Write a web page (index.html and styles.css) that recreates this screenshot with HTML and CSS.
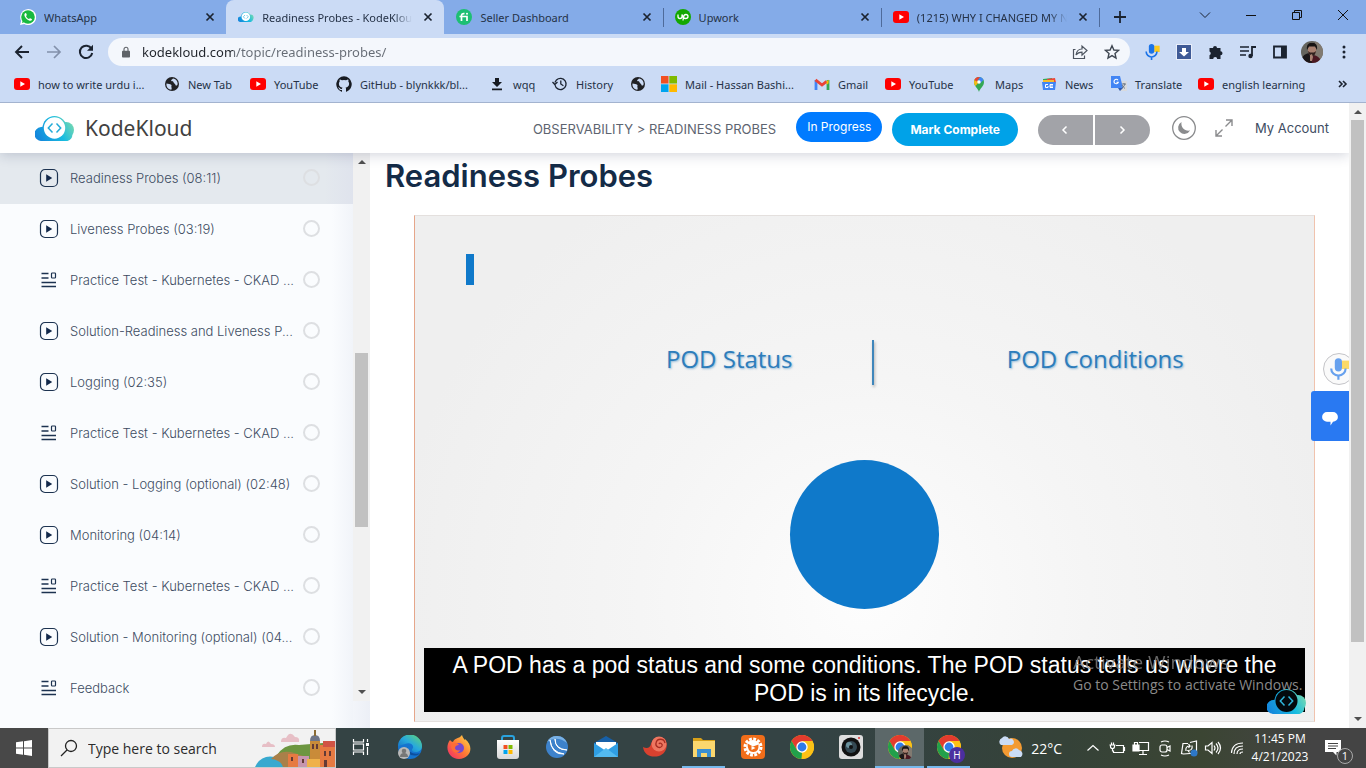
FILE: index.html
```html
<!DOCTYPE html>
<html lang="en">
<head>
<meta charset="utf-8">
<title>Readiness Probes - KodeKloud</title>
<link rel="stylesheet" href="styles.css">
</head>
<body>
<svg class="defs" aria-hidden="true">
  <defs>
    <linearGradient id="cloudFill" gradientUnits="userSpaceOnUse" x1="4" y1="24" x2="36" y2="6"><stop offset="0" stop-color="#1487dc"/><stop offset=".6" stop-color="#18bce0"/><stop offset="1" stop-color="#6fd6b4"/></linearGradient>
    <linearGradient id="edgeFill" x1="0" y1="1" x2="1" y2="0"><stop offset="0" stop-color="#1061bd"/><stop offset=".5" stop-color="#27a9dd"/><stop offset="1" stop-color="#66d96f"/></linearGradient>
    <linearGradient id="fireFill" x1="1" y1="0" x2="0" y2="1"><stop offset="0" stop-color="#ffe14d"/><stop offset=".5" stop-color="#ff7a33"/><stop offset="1" stop-color="#f0246f"/></linearGradient>
    <linearGradient id="storeFill" x1="0" y1="0" x2="0" y2="1"><stop offset="0" stop-color="#ffffff"/><stop offset="1" stop-color="#d8d8d8"/></linearGradient>
    <symbol id="youtube" viewBox="0 0 16 16"><rect y="2" width="16" height="12" rx="3" fill="#f00"/><path d="M6.300 5.300v5.400L11 8z" fill="#fff"/></symbol>
    <symbol id="globe" viewBox="0 0 16 16"><circle cx="8" cy="8" r="7" fill="#202124"/><path d="M2.500 7.500c2 .6 3.500.2 4.700 1.200 1 .8-.3 1.800.3 2.700.5.800 0 1.900-.3 2.300C4 13.200 2 11 2.500 7.500zM9 2.500c-1 1-2.200 1.300-1.800 2.300.6 1 2 .2 2.200 1.300.2 1.300 1.800 1.500 2 2.600.3 1.200 1.200 1 2 .3C14.500 6 12 2.600 9 2.500z" fill="#cbdbf5"/></symbol>
    <symbol id="cloud" viewBox="0 0 40 25"><path d="M7 25a7 7 0 0 1-1-14l4-.5h20.500A7.500 7.500 0 0 1 32.500 25z" fill="url(#cloudFill)"/><circle cx="19.500" cy="12" r="12" fill="url(#cloudFill)"/><circle cx="31" cy="14" r="8" fill="url(#cloudFill)"/></symbol>
    <symbol id="kode" viewBox="0 0 40 25"><use href="#cloud"/><circle cx="19.500" cy="12" r="10.700" fill="#fff"/><path d="M17.500 7.500 13.300 12l4.200 4.500M21.500 7.500l4.200 4.500-4.200 4.500" fill="none" stroke="#22abd8" stroke-width="1.500"/></symbol>
    <symbol id="kodeDark" viewBox="0 0 40 25"><use href="#cloud"/><circle cx="19.500" cy="12" r="11" fill="#03090d"/><path d="M17.500 7.500 13.300 12l4.200 4.500M21.500 7.500l4.200 4.500-4.200 4.500" fill="none" stroke="#2fb5da" stroke-width="1.500"/></symbol>
    <symbol id="close" viewBox="0 0 16 16"><path d="m4.500 4.500 7 7m0-7-7 7" stroke="#1b2330" stroke-width="1.700"/></symbol>
    <symbol id="play" viewBox="0 0 20 20"><rect x="1.500" y="1.500" width="17" height="17" rx="4.500" fill="none" stroke="#1c3250" stroke-width="1.200"/><path d="M7.200 6.200v7.600l6-3.800z" fill="#12284a"/></symbol>
    <symbol id="quiz" viewBox="0 0 20 20"><path d="M2.500 3.500h7M2.500 8h7M2.500 12.500H17M2.500 16.500H17" stroke="#1c3250" stroke-width="1.300"/><rect x="12.500" y="3" width="4" height="5" rx=".8" fill="none" stroke="#1c3250" stroke-width="1.200"/></symbol>
    <symbol id="chrome" viewBox="0 0 24 24"><circle cx="12" cy="12" r="12" fill="#fbc116"/><path d="M1.600 6A12 12 0 0 1 22.400 6L12 6.500 6.800 15z" fill="#e33b2e"/><path d="M1.600 6 6.800 15l5.200 2.800L11.500 24A12 12 0 0 1 1.600 6z" fill="#22a04b"/><path d="M22.400 6H12l5.200 9-5.700 9A12 12 0 0 0 22.400 6z" fill="#fbc116"/><circle cx="12" cy="12" r="5.700" fill="#fff"/><circle cx="12" cy="12" r="4.400" fill="#2f7bea"/></symbol>
    <symbol id="person" viewBox="0 0 22 22"><clipPath id="faceClip"><circle cx="11" cy="11" r="11"/></clipPath><g clip-path="url(#faceClip)"><path d="M0 0h22v22H0z" fill="#65645d"/><path d="M14 0h8v22h-8z" fill="#817a71"/><path d="M2 22c0-6 4-8 9-8s9 3 9 8z" fill="#4c1822"/><path d="M0 22c0-6 3-9 8-10l3 10z" fill="#1b1718"/><ellipse cx="11" cy="9" rx="4.200" ry="5.600" fill="#a88070"/><path d="M6 9c-1-7 3-7 5-7s6 0 5 7l-2-3.500-6 0z" fill="#171414"/><path d="M7 10c1 7 7 7 8 0l-2 1.500h-4z" fill="#30211e"/><path d="m9 20 0-6 2-1 1 3-1 4z" fill="#a98273"/></g></symbol>
    <symbol id="mic" viewBox="0 0 20 20"><path d="M12.500 3h6v7h-6z" fill="#fbc91c"/><rect x="6.500" y="1" width="6" height="11" rx="3" fill="#1a73e8"/><path d="M3.500 9.500a6 6 0 0 0 12 0M9.500 15.500V19" fill="none" stroke="#1a73e8" stroke-width="1.800"/></symbol>
  </defs>
</svg>

<header class="browser">
  <div class="tabstrip">
    <nav class="tabs" aria-label="Open tabs">
      <div class="tab"><svg class="i16" viewBox="0 0 16 16"><path d="M0 16l1.200-4.200A8 8 0 1 1 4.300 15z" fill="#fff"/><circle cx="8" cy="8" r="6.800" fill="#18b93f"/><path d="M2 14l.8-3 2 2z" fill="#18b93f"/><path d="M5.500 4c-2 1-1 4 1.200 6s4.600 2.500 5.300.7c.2-.7-1.700-1.800-2.200-1.400l-.7.800C8 9.800 6.300 8.200 6 7l.8-.8C7 5.600 6.200 3.800 5.500 4z" fill="#fff"/></svg><span>WhatsApp</span><button aria-label="Close WhatsApp"><svg class="i16"><use href="#close"/></svg></button></div>
      <div class="tab active"><svg class="i16"><use href="#kode"/></svg><span>Readiness Probes - KodeKloud</span><button aria-label="Close Readiness Probes"><svg class="i16"><use href="#close"/></svg></button></div>
      <div class="tab"><svg class="i16" viewBox="0 0 16 16"><circle cx="8" cy="8" r="8" fill="#1dbf73"/><path d="M3.500 7.500H11V12M5.500 12V6.500Q5.500 4.300 8.500 4.700" fill="none" stroke="#fff" stroke-width="1.700"/><circle cx="11" cy="4.800" r="1" fill="#fff"/></svg><span>Seller Dashboard</span><button aria-label="Close Seller Dashboard"><svg class="i16"><use href="#close"/></svg></button></div>
      <div class="tab ruled"><svg class="i16" viewBox="0 0 16 16"><circle cx="8" cy="8" r="8" fill="#14a800"/><path d="M3 5.500v2q0 2 2 2t2-2v-2q1 4 3.500 4 2.500 0 2.500-2t-2.200-2Q9 5.500 8.500 8L8 11.500" fill="none" stroke="#fff" stroke-width="1.300"/></svg><span>Upwork</span><button aria-label="Close Upwork"><svg class="i16"><use href="#close"/></svg></button></div>
      <div class="tab ruled last"><svg class="i16"><use href="#youtube"/></svg><span>(1215) WHY I CHANGED MY NAME</span><button aria-label="Close video"><svg class="i16"><use href="#close"/></svg></button></div>
    </nav>
    <button class="newtab" aria-label="New tab"><svg class="i16" viewBox="0 0 16 16"><path d="M8 2v12M2 8h12" stroke="#1b2330" stroke-width="1.800"/></svg></button>
    <div class="wincontrols">
      <button aria-label="Search tabs"><svg class="i12" viewBox="0 0 12 12"><path d="m1 3.500 5 5 5-5" fill="none" stroke="#1b2330"/></svg></button>
      <button aria-label="Minimize"><svg class="i12" viewBox="0 0 12 12"><path d="M1 6.500h10" stroke="#111"/></svg></button>
      <button aria-label="Restore"><svg class="i12" viewBox="0 0 12 12"><path d="M1.500 3.500h7v7h-7zM3.500 3.500v-2h7v7h-2" fill="none" stroke="#111"/></svg></button>
      <button aria-label="Close window"><svg class="i12" viewBox="0 0 12 12"><path d="m1 1 10 10M11 1 1 11" stroke="#111"/></svg></button>
    </div>
  </div>
  <div class="toolbar">
    <button aria-label="Back"><svg class="i16" viewBox="0 0 16 16"><path d="M15 8H2m6-6L2 8l6 6" fill="none" stroke="#1b2330" stroke-width="1.900"/></svg></button>
    <button aria-label="Forward"><svg class="i16" viewBox="0 0 16 16"><path d="M1 8h13M8 2l6 6-6 6" fill="none" stroke="#8391ab" stroke-width="1.700"/></svg></button>
    <button aria-label="Reload"><svg class="i16" viewBox="0 0 16 16"><path d="M13.500 4.800A6.200 6.200 0 1 0 14.200 9" fill="none" stroke="#1b2330" stroke-width="2"/><path d="M15 .8v6H9z" fill="#1b2330"/></svg></button>
    <div class="omnibox">
      <svg class="lock" viewBox="0 0 10 14"><path d="M1 5.500h8q1 0 1 1V13q0 1-1 1H1q-1 0-1-1V6.500q0-1 1-1z" fill="#5f6368"/><path d="M2.500 6V3.500a2.500 2.500 0 0 1 5 0V6" fill="none" stroke="#5f6368" stroke-width="1.400"/></svg>
      <input class="url" type="text" aria-label="Address" value="kodekloud.com/topic/readiness-probes/">
      <button aria-label="Share"><svg class="i16" viewBox="0 0 16 16"><path d="M3.500 5.500H1.500v9h11v-3" fill="none" stroke="#4c545f" stroke-width="1.200"/><path d="M10 2v3C6.500 5 4.500 7.500 4 11c1.500-2 3-2.800 6-2.800v3L15 6.500z" fill="none" stroke="#4c545f" stroke-width="1.200"/></svg></button>
      <button aria-label="Bookmark this tab"><svg class="i16" viewBox="0 0 16 16"><path d="m8 1.800 1.900 4.200 4.600.4L11 9.500l1 4.500-4-2.400L4 14l1-4.500L1.500 6.400 6.100 6z" fill="none" stroke="#3e4651" stroke-width="1.400"/></svg></button>
    </div>
    <div class="extensions">
      <button aria-label="Voice typing"><svg class="i18"><use href="#mic"/></svg></button>
      <button aria-label="Downloader"><svg class="i16" viewBox="0 0 16 16"><path d="M0 0h16v16H0z" fill="#e9eefa"/><path d="M1 1h14v14H1z" fill="#3f5a96"/><path d="M6 4h4v4h3l-5 4.500L3 8h3z" fill="#fff"/></svg></button>
      <button aria-label="Extensions"><svg class="i16" viewBox="0 0 16 16"><path d="M1.500 4H5a2 2 0 0 1 4 0h3.500v3.200a2 2 0 0 1 0 4V15H9.200a2 2 0 0 0-4 0H1.500v-3.800a2 2 0 0 0 0-3.700z" fill="#1b2330"/></svg></button>
      <button aria-label="Media"><svg class="i16" viewBox="0 0 16 16"><path d="M0 3h9M0 7h9M0 11h6" stroke="#1b2330" stroke-width="1.600"/><path d="M12 12V3h4" fill="none" stroke="#1b2330" stroke-width="1.800"/><circle cx="10.500" cy="12" r="2.200" fill="#1b2330"/></svg></button>
      <button aria-label="Side panel"><svg class="i16" viewBox="0 0 16 16"><path d="M2 2.500h12v11H2z" fill="none" stroke="#1b2330" stroke-width="1.800"/><path d="M9 2h5v12H9z" fill="#1b2330"/></svg></button>
      <button aria-label="Profile"><svg class="i22"><use href="#person"/></svg></button>
      <button aria-label="Menu"><svg class="i16" viewBox="0 0 16 16"><g fill="#1b2330"><circle cx="8" cy="3" r="1.500"/><circle cx="8" cy="8" r="1.500"/><circle cx="8" cy="13" r="1.500"/></g></svg></button>
    </div>
  </div>
  <nav class="bookmarks" aria-label="Bookmarks">
    <a href="#"><svg class="i16"><use href="#youtube"/></svg>how to write urdu i...</a>
    <a href="#"><svg class="i16"><use href="#globe"/></svg>New Tab</a>
    <a href="#"><svg class="i16"><use href="#youtube"/></svg>YouTube</a>
    <a href="#"><svg class="i16" viewBox="0 0 16 16"><path d="M8 .3a8 8 0 0 0-2.500 15.500c.4.100.5-.2.500-.4v-1.500c-2.200.5-2.700-1-2.700-1-.4-.9-.9-1.200-.9-1.200-.7-.5.100-.5.100-.5.800.100 1.200.8 1.200.8.700 1.300 1.900.9 2.300.7.100-.5.300-.9.500-1.100-1.800-.2-3.600-.9-3.600-4 0-.8.300-1.500.8-2.100 0-.2-.4-1 .1-2.100 0 0 .7-.2 2.200.8a7.500 7.500 0 0 1 4 0c1.500-1 2.200-.8 2.200-.8.500 1.100.2 1.900.1 2.100.5.600.8 1.300.8 2.100 0 3.100-1.900 3.800-3.600 4 .3.300.5.800.5 1.500v2.300c0 .2.100.5.500.4A8 8 0 0 0 8 .3z" fill="#171b22"/></svg>GitHub - blynkkk/bl...</a>
    <a href="#"><svg class="i16" viewBox="0 0 16 16"><path d="M6 2h4v4h3l-5 5-5-5h3zM3 12.500h10v1.800H3z" fill="#171b22"/></svg>wqq</a>
    <a href="#"><svg class="i16" viewBox="0 0 16 16"><path d="M3 9a5.600 5.600 0 1 0 1.500-5L2.800 6.500M.5 6l2.300 2.500L5.500 6M8.800 4.500V8l2.600 1.700" fill="none" stroke="#1b2330" stroke-width="1.300"/></svg>History</a>
    <a href="#" aria-label="Untitled"><svg class="i16"><use href="#globe"/></svg></a>
    <a href="#"><svg class="i16" viewBox="0 0 16 16"><path d="M0 0h7.500v7.500H0z" fill="#f25022"/><path d="M8.300 0H16v7.500H8.300z" fill="#7fba00"/><path d="M0 8.300h7.500V16H0z" fill="#00a4ef"/><path d="M8.300 8.300H16V16H8.300z" fill="#ffb900"/></svg>Mail - Hassan Bashi...</a>
    <a href="#"><svg class="i16" viewBox="0 0 16 16"><path d="M2 14V4" stroke="#4285f4" stroke-width="2.800"/><path d="M14 14V4" stroke="#34a853" stroke-width="2.800"/><path d="M1.500 3.800 8 9l4.600-3.700" fill="none" stroke="#ea4335" stroke-width="2.800"/><path d="m12.600 5.300 2-1.600v3.500l-2 1.500z" fill="#fbbc04"/></svg>Gmail</a>
    <a href="#"><svg class="i16"><use href="#youtube"/></svg>YouTube</a>
    <a href="#"><svg class="i16" viewBox="0 0 16 16"><path d="M8 16c-1-4-5-5.500-5-10a5 5 0 0 1 10 0c0 4.500-4 6-5 10z" fill="#34a853"/><path d="M3 6a5 5 0 0 1 2-4l3 4-3.500 4C3.600 9 3 7.700 3 6z" fill="#f5bb16"/><path d="M3.400 4A5 5 0 0 1 9 1.100L5.800 5.500z" fill="#ea4335"/><path d="M9 1.100A5 5 0 0 1 12.500 4L9 7.500 6.500 5z" fill="#4285f4"/><circle cx="8" cy="6" r="1.700" fill="#fff"/></svg>Maps</a>
    <a href="#"><svg class="i16" viewBox="0 0 16 16"><path d="m2 3 9-1 1 5H2z" fill="#36a852"/><path d="m6 3 8-1 1 5H6z" fill="#ee4637"/><path d="M2 4h11v4H2z" fill="#f8bd2c"/><path d="M1 6h14l-1 8H2z" fill="#4285f4"/><path d="M7 8.500H4.500v3H7V10M12 8.500H9v3h3M9 10h3" fill="none" stroke="#fff"/></svg>News</a>
    <a href="#"><svg class="i16" viewBox="0 0 16 16"><path d="M7 5h9v10H9z" fill="#d8dade"/><path d="M0 0h9l3 12H0z" fill="#4285f4"/><path d="m7 12 5 0-3 3z" fill="#315caf"/><path d="M7 4.200a2.200 2.200 0 1 0 .3 2H5.400" fill="none" stroke="#fff" stroke-width="1.100"/><path d="M11 8h4M13 7v1M14 8q-1 3-3 4m0-3q1 2 3 3.500" fill="none" stroke="#596575" stroke-width=".8"/></svg>Translate</a>
    <a href="#"><svg class="i16"><use href="#youtube"/></svg>english learning</a>
    <button aria-label="More bookmarks"><svg class="i12" viewBox="0 0 12 12"><path d="m2 3 3 3-3 3M6 3l3 3-3 3" fill="none" stroke="#1b2330" stroke-width="1.600"/></svg></button>
  </nav>
</header>

<div class="viewport">
  <div class="site">
    <header class="siteheader">
      <a class="brand" href="#"><svg viewBox="0 0 40 25"><use href="#kode"/></svg><span>KodeKloud</span></a>
      <nav class="crumbs" aria-label="Breadcrumb"><a href="#">OBSERVABILITY</a> &gt; <a href="#">READINESS PROBES</a></nav>
      <span class="status">In Progress</span>
      <button class="complete">Mark Complete</button>
      <div class="pager">
        <button aria-label="Previous"><svg class="i10" viewBox="0 0 10 10"><path d="M6.500 1.500 3 5l3.500 3.500" fill="none" stroke="#fff" stroke-width="1.500"/></svg></button>
        <button aria-label="Next"><svg class="i10" viewBox="0 0 10 10"><path d="M3.500 1.500 7 5 3.500 8.500" fill="none" stroke="#fff" stroke-width="1.500"/></svg></button>
      </div>
      <button class="mode" aria-label="Dark mode"><svg viewBox="0 0 24 24"><circle cx="12" cy="12" r="11.300" fill="none" stroke="#8a8b8d" stroke-width="1.300"/><path d="M9.500 6a6.300 6.300 0 1 0 8.500 8.500c-5 1-9.500-3-8.500-8.500z" fill="#8a8b8d"/></svg></button>
      <button class="expand" aria-label="Full screen"><svg class="i18" viewBox="0 0 18 18"><path d="M11 1h6v6M17 1l-6.500 6.500M1 11v6h6M1 17l6.500-6.500" fill="none" stroke="#8a8b8d" stroke-width="1.400"/></svg></button>
      <a class="account" href="#">My Account</a>
    </header>

    <div class="course">
      <aside class="sidebar">
        <ul class="lessons">
          <li class="current"><a href="#"><svg class="i20"><use href="#play"/></svg><span>Readiness Probes (08:11)</span></a><input type="checkbox" aria-label="Readiness Probes done"></li>
          <li><a href="#"><svg class="i20"><use href="#play"/></svg><span>Liveness Probes (03:19)</span></a><input type="checkbox" aria-label="Liveness Probes done"></li>
          <li><a href="#"><svg class="i20"><use href="#quiz"/></svg><span>Practice Test - Kubernetes - CKAD ...</span></a><input type="checkbox" aria-label="Practice test 1 done"></li>
          <li><a href="#"><svg class="i20"><use href="#play"/></svg><span>Solution-Readiness and Liveness P...</span></a><input type="checkbox" aria-label="Solution Readiness done"></li>
          <li><a href="#"><svg class="i20"><use href="#play"/></svg><span>Logging (02:35)</span></a><input type="checkbox" aria-label="Logging done"></li>
          <li><a href="#"><svg class="i20"><use href="#quiz"/></svg><span>Practice Test - Kubernetes - CKAD ...</span></a><input type="checkbox" aria-label="Practice test 2 done"></li>
          <li><a href="#"><svg class="i20"><use href="#play"/></svg><span>Solution - Logging (optional) (02:48)</span></a><input type="checkbox" aria-label="Solution Logging done"></li>
          <li><a href="#"><svg class="i20"><use href="#play"/></svg><span>Monitoring (04:14)</span></a><input type="checkbox" aria-label="Monitoring done"></li>
          <li><a href="#"><svg class="i20"><use href="#quiz"/></svg><span>Practice Test - Kubernetes - CKAD ...</span></a><input type="checkbox" aria-label="Practice test 3 done"></li>
          <li><a href="#"><svg class="i20"><use href="#play"/></svg><span>Solution - Monitoring (optional) (04...</span></a><input type="checkbox" aria-label="Solution Monitoring done"></li>
          <li><a href="#"><svg class="i20"><use href="#quiz"/></svg><span>Feedback</span></a><input type="checkbox" aria-label="Feedback done"></li>
        </ul>
        <div class="scrollbar inner"><i class="up"></i><i class="thumb"></i><i class="down"></i></div>
      </aside>

      <main class="lesson">
        <h1>Readiness Probes</h1>
        <section class="video" aria-label="Lesson video">
          <div class="cursor"></div>
          <div class="heads"><span>POD Status</span><i></i><span>POD Conditions</span></div>
          <div class="disc"></div>
          <p class="caption">A POD has a pod status and some conditions. The POD status tells us where the<br>POD is in its lifecycle.</p>
          <svg class="badge" viewBox="0 0 40 25"><use href="#kodeDark"/></svg>
        </section>
      </main>
    </div>
    <button class="voice" aria-label="Voice typing"><svg viewBox="0 0 20 20"><use href="#mic"/></svg></button>
    <button class="chat" aria-label="Chat"><svg viewBox="0 0 16 14"><path d="M5 0h6a4.800 4.800 0 0 1 0 9.800L8.500 13.500V9.800H5A4.900 4.900 0 0 1 5 0z" fill="#fff"/></svg></button>
    <div class="activate"><strong>Activate Windows</strong><span>Go to Settings to activate Windows.</span></div>
  </div>
  <div class="scrollbar outer"><i class="up"></i><i class="thumb"></i><i class="down"></i></div>
</div>

<footer class="taskbar">
  <button class="start" aria-label="Start"><svg class="i16" viewBox="0 0 16 16"><path d="M0 2.300 7 1.300v6.200H0zM8 1.200 16 0v7.500H8zM0 8.500h7v6.200l-7-1zM8 8.500h8V16l-8-1.200z" fill="#fff"/></svg></button>
  <label class="search">
    <svg class="i18" viewBox="0 0 18 18"><circle cx="11" cy="7" r="5.500" fill="none" stroke="#222" stroke-width="1.300"/><path d="M7 11 1 17" stroke="#222" stroke-width="1.300"/></svg>
    <input type="text" aria-label="Search" placeholder="Type here to search">
    <svg class="town" viewBox="0 0 80 38"><g fill="#e7bfc6"><path d="M7 18q0-4 4-3 2-5 5 0 4 0 4 3zM26 13q0-5 5-4 4-8 9-1 5 0 4 5z"/></g><path d="M0 38q6-13 20-10l12 10z" fill="#38a9cf"/><path d="M22 26q8-12 22-10l36-3v25H32z" fill="#6c9640"/><path d="M16 30q8-9 20-7l12 4-10 11H28q-2-7-12-8z" fill="#a98049"/><path d="M33 25h10v13H33zM64 16h16v22H64z" fill="#e67a42"/><path d="M43 27h11v11H43z" fill="#c695ae"/><path d="M52 30h13v8H52z" fill="#efb149"/><path d="M68 12h12v6H68z" fill="#d15445"/><path d="M55 12h10v18H55z" fill="#c98b39"/><path d="M55 12q0-6 5-6t5 6z" fill="#6f7688"/><path d="M59 1h2v6h-2z" fill="#8a6b35"/><path d="M57 15h2v5h-2zM61 15h2v5h-2zM69 22h2v5h-2zM74 22h2v5h-2zM36 28h2v4h-2zM47 30h2v4h-2zM69 31h3v7h-3z" fill="#643a36"/></svg>
  </label>
  <nav class="apps" aria-label="Apps">
    <button aria-label="Task view"><svg class="i18" viewBox="0 0 18 18"><path d="M1.500 1v3h10V1M1.500 17v-3h10v3M1.500 6h10v6h-10zM15.500 1v3M15.500 9v8" fill="none" stroke="#fff" stroke-width="1.200"/><path d="M14 5h3v3h-3z" fill="#fff"/></svg></button>
    <button aria-label="Edge"><svg viewBox="0 0 24 24"><circle cx="12" cy="12" r="12" fill="#1574cf"/><path d="M0 12A12 12 0 0 1 24 11c0 4-3 6-7 6-3 0-4-2-2-4 1-4-4-6-8-4-4 1-7 2-7 3z" fill="url(#edgeFill)"/><path d="M9 12c-1 6 4 10 11 8l2-2c-6 2-12-1-13-6z" fill="#0d4f9e"/><circle cx="6" cy="18" r="6" fill="#b9b9b9"/><circle cx="6" cy="16" r="2.300" fill="#777"/><path d="M2 22q0-4 4-4t4 4z" fill="#777"/></svg></button>
    <button aria-label="Firefox"><svg viewBox="0 0 24 24"><path d="M3 5c1 1 2 2 3 2 1-3 5-4 7-5l2-2c1 3 2 4 3 5V4c10 8 5 20-6 20C2 24-3 13 3 5z" fill="url(#fireFill)"/><circle cx="12" cy="13" r="5" fill="#7748ce"/><path d="M4 10c4-3 7-2 8 0-2 0-4 1-4 3s3 3 5 2c-2 5-9 3-9-5z" fill="#ff6c36"/></svg></button>
    <button aria-label="Microsoft Store"><svg viewBox="0 0 24 24"><path d="M6 7V3q0-2 2-2h8q2 0 2 2v4" fill="none" stroke="#2aa3de" stroke-width="2"/><path d="M1 5h22v16q0 3-3 3H4q-3 0-3-3z" fill="url(#storeFill)"/><path d="M7.500 10h4v4h-4z" fill="#f25022"/><path d="M12.500 10h4v4h-4z" fill="#7fba00"/><path d="M7.500 15h4v4h-4z" fill="#00a4ef"/><path d="M12.500 15h4v4h-4z" fill="#ffb900"/></svg></button>
    <button aria-label="Browser"><svg viewBox="0 0 24 24"><circle cx="12" cy="12" r="11" fill="#3d82cb"/><path d="M2 7A11 11 0 0 1 22 8Q12 0 2 7z" fill="#79b1e5"/><path d="M5 5q1 12 14 14-12 1-14-14zM10 4q0 10 12 11-12 0-12-11z" fill="#fff" stroke="#fff"/></svg></button>
    <button aria-label="Mail"><svg viewBox="0 0 24 24"><path d="M0 8 12 1l12 7v14H0z" fill="#1760a8"/><path d="M2 7h20v9H2z" fill="#fff"/><path d="m0 8 12 8L24 8v14H0z" fill="#2f9ee4"/><path d="m0 22 12-9 12 9z" fill="#53baf0"/></svg></button>
    <button aria-label="Nautilus"><svg viewBox="0 0 24 24"><path d="M0 12c4 2 7 1 8-3C10 2 17 0 22 4c4 6 1 15-6 17C8 23 1 20 0 12z" fill="#d9412f"/><circle cx="16" cy="9" r="7.500" fill="#ed7660"/><path d="M16 9c1-2 4 0 3 2-2 3-7 1-6-3 1-5 8-5 9 0" fill="none" stroke="#a62c21" stroke-width="1.300"/></svg></button>
    <button class="open" aria-label="File Explorer"><svg viewBox="0 0 24 24"><path d="M1 3h8l2 2h12v17H1z" fill="#d7a019"/><path d="M1 6h22v16H1z" fill="#fbd76e"/><path d="M5 14h14v8h-4v-4H9v4H5z" fill="#3a8fd2"/></svg></button>
    <button aria-label="Player"><svg viewBox="0 0 24 24"><rect width="24" height="24" rx="4" fill="#f16d19"/><circle cx="12" cy="12" r="8" fill="none" stroke="#fff" stroke-width="3" stroke-dasharray="2.800 1.388"/><circle cx="12" cy="12" r="7" fill="#fff"/><path d="m6.500 8.500 5.500 3 5.500-2q.5 8-5.500 7.500-5.500 0-5.500-8.500z" fill="#f16d19"/><path d="m10.500 11 4 2-4 2z" fill="#fff"/></svg></button>
    <button aria-label="Chrome"><svg><use href="#chrome"/></svg></button>
    <button aria-label="Camera"><svg viewBox="0 0 24 24"><rect width="24" height="24" rx="3" fill="#dedede"/><circle cx="12" cy="12" r="9.500" fill="#111"/><circle cx="12" cy="12" r="6" fill="#344852"/><circle cx="10" cy="10" r="3" fill="#6b929d"/><circle cx="12" cy="12" r="2" fill="#111"/><circle cx="20" cy="3" r="1" fill="#d33"/></svg></button>
    <button class="open focus" aria-label="Chrome, profile"><svg viewBox="0 0 24 24"><use href="#chrome"/><use href="#person" x="10" y="10" width="15" height="15"/></svg></button>
    <button class="open" aria-label="Chrome, profile H"><svg viewBox="0 0 24 24"><use href="#chrome"/></svg><b>H</b></button>
  </nav>
  <div class="tray">
    <button class="weather"><svg viewBox="0 0 24 24"><circle cx="13" cy="12" r="10" fill="#f39a32"/><path d="M2 9a4 4 0 0 1 1-7 4 4 0 0 1 7 1 3 3 0 0 1 3 6zM13 21a3 3 0 0 1 0-6 4 4 0 0 1 7-1 4 4 0 0 1 2 7z" fill="#cbdcf6"/></svg>22°C</button>
    <div class="trayicons">
      <button aria-label="Hidden icons"><svg class="i16" viewBox="0 0 16 16"><path d="m2.500 10.500 5.500-5 5.500 5" fill="none"/></svg></button>
      <button aria-label="Battery"><svg class="i16" viewBox="0 0 16 16"><path d="M7 5.500h7.500v7H4.500v-2M14.500 7.500h1v3h-1M1.500 5v1.500q0 2 2 2t2-2V5M.5 5h6M2.500 5V2.500M4.500 5V2.500M3.500 8.500v3" fill="none"/></svg></button>
      <button aria-label="Security"><svg class="i16" viewBox="0 0 16 16"><path d="M6 2.500h9.500v8H5M10 10.500v4M6 14.500h8" fill="none"/><path d="M0 5h6v6H0z" fill="#fff"/><path d="M1.500 5V2.500h3V5" fill="none"/></svg></button>
      <button aria-label="Meet now"><svg class="i16" viewBox="0 0 16 16"><rect x="3" y="5" width="7" height="7" rx="2" fill="none"/><path d="m10 7.500 3-1.500v5l-3-1.500M4 2q4-2 8 0M4 15q4 2 8 0" fill="none"/></svg></button>
      <button aria-label="Input"><svg class="i16" viewBox="0 0 16 16"><path d="M9 2.500 15.500 1v12l-13 1-2-.5 1.500-10H7M5 11q-1-5 4-5l-1.500-2M9 6 7.500 8M11 5.500q1 5-4 5l1.500 2" fill="none"/><circle cx="13" cy="13" r="3.500" fill="#2d78c7" stroke="none"/></svg></button>
      <button aria-label="Volume"><svg class="i16" viewBox="0 0 16 16"><path d="M.5 6v4H3l4 3.500v-11L3 6zM9 5.500q2 2.500 0 5M11 3.500q4 4.500 0 9M13 2q5 6 0 12" fill="none"/></svg></button>
      <button aria-label="Network"><svg class="i16" viewBox="0 0 16 16"><path d="M2.500 13Q3 3 14 3M5 14Q5 6 14 6M8 14q0-5 6-5M11 14q0-2 3-2" fill="none"/></svg></button>
    </div>
    <button class="clock"><time>11:45 PM</time><time>4/21/2023</time></button>
    <button class="notes" aria-label="Notifications, 1 new"><svg class="i16" viewBox="0 0 16 16"><path d="M0 0h16v12h-4.500v3.500L8 12H0z" fill="#fff"/><path d="M3 3.500h10M3 6h10M3 8.500h8" stroke="#444"/></svg><b>1</b></button>
  </div>
</footer>
</body>
</html>
```
FILE: styles.css
```css
* { box-sizing: border-box; }
body {
  margin: 0;
  height: 100vh;
  display: flex;
  flex-direction: column;
  overflow: hidden;
  font-family: Inter, "Liberation Sans", sans-serif;
  color: #3d4c62;
  background: #fff;
}
button { font: inherit; color: inherit; border: 0; padding: 0; background: none; display: flex; align-items: center; justify-content: center; }
a { color: inherit; text-decoration: none; }
svg { flex: none; display: block; }
.defs { position: absolute; width: 0; height: 0; }
.i10 { width: 10px; height: 10px; }
.i12 { width: 12px; height: 12px; }
.i16 { width: 16px; height: 16px; }
.i18 { width: 18px; height: 18px; }
.i20 { width: 20px; height: 20px; }
.i22 { width: 22px; height: 22px; }

/* browser frame */
.browser { background: #cbdbf5; border-bottom: 1px solid #a3b3cf; font-family: "Noto Sans", "Open Sans", sans-serif; font-size: 11px; color: #253247; }
.tabstrip { display: flex; height: 34px; padding-left: 8px; background: #84abe8; }
.tabs { flex: 0 1 1091px; min-width: 0; display: flex; }
.tab { flex: 1 1 0; min-width: 0; display: flex; align-items: center; gap: 8px; padding: 0 8px 0 12px; }
.tab span { flex: 1; overflow: hidden; white-space: nowrap; }
.tab.active { background: #cbdbf5; border-radius: 8px 8px 0 0; }
.tab.active span, .tab.last span { -webkit-mask-image: linear-gradient(90deg, #000 88%, transparent); mask-image: linear-gradient(90deg, #000 88%, transparent); }
.tab.ruled, .newtab { background: linear-gradient(#4e6b9b, #4e6b9b) 0 8px / 1px 19px no-repeat; }
.newtab { width: 42px; }
.wincontrols { margin-left: auto; display: flex; }
.wincontrols button { width: 46px; height: 29px; }
.toolbar { display: flex; align-items: center; height: 36px; padding: 0 0 0 14px; gap: 16px; }
.omnibox { flex: 1; display: flex; align-items: center; gap: 16px; height: 28px; margin-left: -2px; padding: 0 10px 0 14px; border-radius: 14px; background: #f4f7fc; }
.lock { width: 8px; height: 12px; }
.url {
  flex: 1; min-width: 0; border: 0; padding: 0; margin-left: -4px; outline: 0;
  font: 13px "Noto Sans", "Open Sans", sans-serif;
  color: transparent;
  background: linear-gradient(90deg, #20242b 91px, #666c75 91px);
  -webkit-background-clip: text; background-clip: text;
}
.extensions { display: flex; align-items: center; margin-right: 6px; margin-left: -10px; }
.extensions button { width: 32px; }
.bookmarks { display: grid; grid-template-columns: 150px 86px 86px 153px 63px 78px 31px 153px 71px 86px 70px 70px 87px 1fr auto; align-items: center; height: 32px; padding: 0 17px 4px 14px; }
.bookmarks a { display: flex; align-items: center; gap: 8px; white-space: nowrap; }

/* site */
.viewport { flex: 1; min-height: 0; display: flex; }
.site { position: relative; flex: 1; min-width: 0; display: flex; flex-direction: column; overflow: hidden; }
.siteheader { position: relative; z-index: 1; flex: none; display: flex; align-items: center; height: 50px; padding: 0 20px 0 35px; background: #fff; box-shadow: 0 2px 12px rgba(30, 40, 80, .2); white-space: nowrap; }
.brand { display: flex; align-items: center; gap: 10px; margin-right: auto; font: 21px/26px "Noto Sans", sans-serif; color: #414141; }
.brand svg { width: 40px; height: 25px; }
.crumbs { font-size: 13px; padding-top: 2px; color: #5d6470; }
.status { margin: 0 10px 2px 20px; padding: 0 11px; border-radius: 15px; background: #007bff; color: #fff; font-size: 12px; line-height: 30px; }
.complete { height: 33px; margin-top: 2px; padding: 0 18px; border-radius: 17px; background: #00a2e8; color: #fff; font-size: 12px; font-weight: 700; }
.pager { display: flex; gap: 2px; margin: 4px 22px 0 20px; border-radius: 15px; overflow: hidden; }
.pager button { width: 55px; height: 30px; background: #a2a3a8; }
.mode svg { width: 24px; height: 24px; }
.expand { margin: 0 22px 0 19px; }
.account { font-size: 13px; }
.course { flex: 1; min-height: 0; display: flex; }
.sidebar { flex: 0 0 370px; display: flex; background: linear-gradient(90deg, #fafcfe 90%, #eceff6); }
.lessons { flex: 1; min-width: 0; margin: 0; padding: 0; list-style: none; background: linear-gradient(90deg, #fafcfe 94%, #f1f4f9); }
.lessons li { display: flex; align-items: center; height: 51px; padding: 0 33px 2px 39px; font-size: 13px; font-weight: 300; }
.lessons .current { background: linear-gradient(90deg, #e4e9ee 92%, #dfe3ed); }
.lessons a { flex: 1; min-width: 0; display: flex; align-items: center; gap: 11px; white-space: nowrap; }
.lessons input { appearance: none; width: 17px; height: 17px; margin: 0; border: 2px solid #dddfe2; border-radius: 50%; }
.scrollbar { flex: 0 0 17px; display: flex; flex-direction: column; align-items: center; background: #f1f1f1; }
.scrollbar i { display: block; }
.up, .down { border: 4px solid transparent; }
.up { border-top: 0; border-bottom-color: #505050; margin: 7px 0 6px; }
.down { border-bottom: 0; border-top-color: #505050; margin: auto 0 7px; }
.thumb { width: 13px; background: #c1c1c1; }
.inner { margin-bottom: 27px; }
.inner .thumb { margin-top: 183px; height: 174px; }
.outer .thumb { height: 522px; }

.lesson { flex: 1; min-width: 0; padding: 3px 34px 0 44px; }
.lesson h1 { margin: 0 0 19px -29px; font-size: 31px; line-height: 40px; font-weight: 600; color: #142b47; }
.video {
  position: relative; height: 507px; display: flex; flex-direction: column; padding: 38px 9px 9px;
  border: 1px solid #e4e0de; border-left-color: #e6a68a; border-right-color: #f0c3ae;
  background: radial-gradient(circle at 50% 76%, #fdfdfd 0, #f5f5f5 38%, #efefef 80%);
}
.cursor { width: 8px; height: 31px; margin-left: 42px; background: #0f79ca; }
.heads { display: grid; grid-template-columns: 1fr 2px 1fr; margin: 54px 0 0 16px; align-items: center; color: #2d7dbb; font: 24px/40px "Open Sans", "Noto Sans", sans-serif; text-align: center; text-shadow: 1px 1px 2px rgba(45, 125, 187, .5); }
.heads i { height: 45px; background: #3f86bb; box-shadow: 1px 2px 3px rgba(0, 0, 0, .3); }
.heads span { padding: 0 0 6px 12px; }
.heads span:first-child { text-align: right; padding-right: 79px; }
.disc { width: 149px; height: 149px; margin: 75px auto 0; border-radius: 50%; background: #0f79ca; }
.caption { margin: auto 0 0; padding: 3px 0 5px; background: #000; color: #fff; font: 23px/28px "Liberation Sans", Arial, sans-serif; text-align: center; }
.badge { position: absolute; right: 7px; bottom: 7px; width: 40px; height: 25px; }
.voice { position: absolute; right: -6px; top: 250px; width: 32px; height: 32px; border: 1px solid #c4c4c8; border-radius: 50%; background: #fafafa; }
.voice svg { width: 24px; height: 24px; opacity: .65; }
.chat { position: absolute; right: 0; top: 288px; width: 38px; height: 50px; border-radius: 3px 0 0 3px; background: #2979f2; }
.chat svg { width: 16px; height: 14px; margin-top: 6px; }
.activate { position: absolute; right: 42px; bottom: 33px; display: grid; width: 234px; font: 14px/20px "Open Sans", "Noto Sans", sans-serif; color: #8a8a8a; white-space: nowrap; }
.activate strong { font-weight: 400; font-size: 19px; line-height: 26px; opacity: .75; }

/* taskbar */
.taskbar { flex: none; height: 40px; display: flex; color: #fff; font-family: "Open Sans", "Noto Sans", sans-serif; background: linear-gradient(90deg, #344344 60%, #354238 78%, #3b4533 88%, #444 96%); }
.start { width: 48px; background: #484848; }
.search { flex: 0 1 288px; min-width: 0; display: flex; align-items: center; gap: 10px; padding: 0 0 0 11px; background: #f2f2f2; border: 1px solid #c9c9c9; }
.search input { flex: 1; min-width: 0; border: 0; padding: 0; background: none; font: 14px "Open Sans", "Noto Sans", sans-serif; color: #222; }
.search input::placeholder { color: #2c2c2c; opacity: 1; }
.town { width: 80px; height: 38px; }
.apps { display: flex; }
.apps button { position: relative; width: 49px; border-bottom: 2px solid transparent; }
.apps svg:not(.i18) { width: 24px; height: 24px; }
.apps .open { border-image: linear-gradient(90deg, transparent 10%, #76b9ed 10% 90%, transparent 90%) 2; }
.apps .focus { background: #5c6869; border-image: none; border-bottom-color: #76b9ed; }
.apps b { position: absolute; right: 8px; bottom: 3px; width: 16px; border-radius: 50%; background: #4b2fa0; font-size: 10px; line-height: 16px; font-weight: 400; }
.tray { margin-left: auto; display: flex; align-items: stretch; }
.weather { gap: 8px; margin-right: 19px; font-size: 14px; }
.weather svg { width: 24px; height: 24px; }
.trayicons { display: flex; }
.trayicons button { width: 24px; }
.trayicons svg { stroke: #fff; stroke-width: 1.2; overflow: visible; }
.clock { flex-direction: column; width: 62px; font-size: 12px; line-height: 18px; }
.notes { position: relative; width: 50px; padding-right: 7px; margin-right: 5px; }
.notes b { position: absolute; right: 8px; bottom: 4px; width: 16px; border: 1px solid #aaa; border-radius: 50%; background: #444; font-size: 11px; line-height: 14px; font-weight: 400; }
```
